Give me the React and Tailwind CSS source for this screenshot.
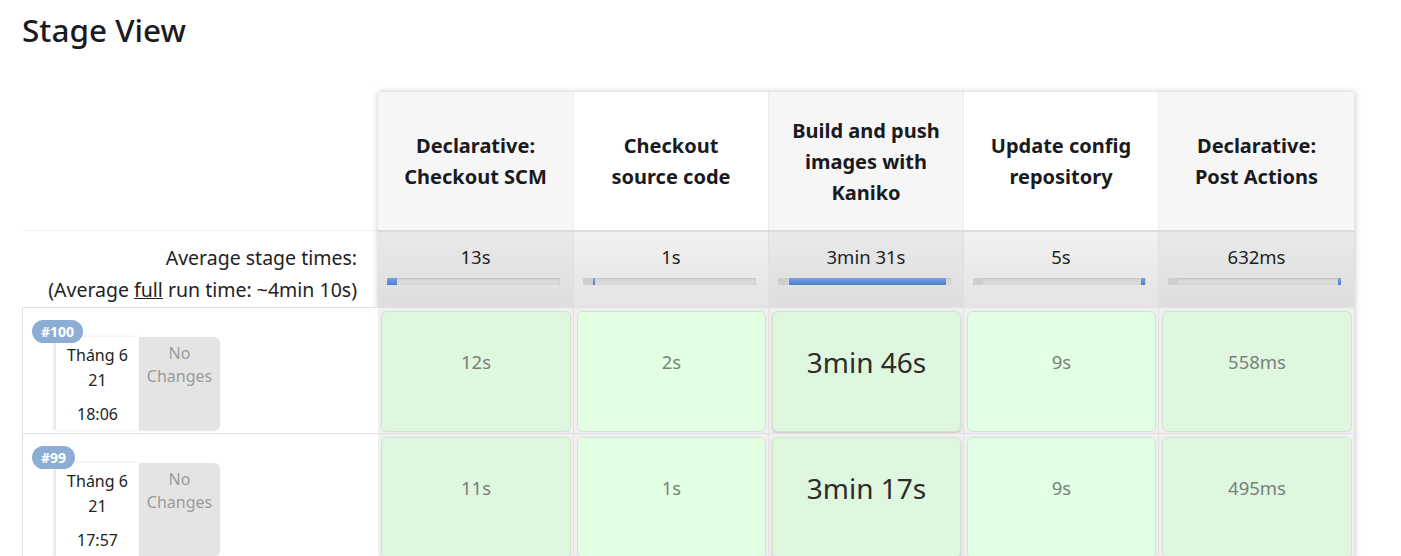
import React from "react";

const stages = [
  { name: ["Declarative:", "Checkout SCM"], avg: "13s", bar: [0, 6] },
  { name: ["Checkout", "source code"], avg: "1s", bar: [5.8, 0.8] },
  { name: ["Build and push", "images with", "Kaniko"], avg: "3min 31s", bar: [6.4, 90.8] },
  { name: ["Update config", "repository"], avg: "5s", bar: [97, 2.4] },
  { name: ["Declarative:", "Post Actions"], avg: "632ms", bar: [98.5, 1.5] },
];

const builds = [
  { id: "#100", date: "Tháng 6", day: "21", time: "18:06", times: ["12s", "2s", "3min 46s", "9s", "558ms"] },
  { id: "#99", date: "Tháng 6", day: "21", time: "17:57", times: ["11s", "1s", "3min 17s", "9s", "495ms"] },
];

const RunInfo = ({ b }) => (
  <div className="relative h-[126px] border-t border-l border-[#e2e2e2] bg-white">
    <div className="absolute left-[33px] top-[29px] flex h-[93px]">
      <div className="flex w-[83px] flex-col items-center bg-white pt-[6px] text-[16px] leading-[25px] text-[#222] shadow-[-2px_0_3px_rgba(0,0,0,0.12)]">
        <span>{b.date}</span>
        <span>{b.day}</span>
        <span className="mt-[9px]">{b.time}</span>
      </div>
      <div className="flex w-[81px] flex-col items-center rounded-r-[6px] bg-[#e4e4e4] pt-[5px] text-[16px] leading-[23px] text-[#9b9b9b] shadow-[0_1px_2px_rgba(0,0,0,0.1)]">
        <span>No</span>
        <span>Changes</span>
      </div>
    </div>
    <span className="absolute left-[9px] top-[12px] flex h-[23px] items-center rounded-full bg-[#8daed4] px-[9px] text-[14px] font-bold text-white">
      {b.id}
    </span>
  </div>
);

export default function App() {
  return (
    <div className="min-h-screen bg-white font-['Noto_Sans',sans-serif] text-[#1a1a22]">
      <h1 className="pl-[22px] pt-[12px] text-[31.5px] font-medium leading-[36px]">Stage View</h1>

      <div className="mt-[44px] ml-[22px] flex">
        {/* left column */}
        <div className="w-[356px] flex-none">
          <div className="h-[138px]" />
          <div className="h-[77px] border-t border-[#f0f0f0] pr-[21px] pt-[11px] text-right text-[19.5px] leading-[32px] text-[#222]">
            <div>Average stage times:</div>
            <div>
              (Average <span className="underline">full</span> run time: ~4min 10s)
            </div>
          </div>
          {builds.map((b) => (
            <RunInfo key={b.id} b={b} />
          ))}
        </div>

        {/* stage columns */}
        <div className="grid w-[977px] flex-none grid-cols-[196px_195px_195px_195px_196px] shadow-[0_0_6px_rgba(0,0,0,0.22)]">
          {stages.map((s, i) => (
            <div
              key={"h" + i}
              className={`flex h-[138px] flex-col items-center justify-center border-r border-[#ececec] px-2 text-center text-[20px] font-bold leading-[31px] ${
                i % 2 === 0 ? "bg-[#f6f6f6]" : "bg-white"
              }`}
            >
              {s.name.map((l) => (
                <span key={l}>{l}</span>
              ))}
            </div>
          ))}

          {stages.map((s, i) => (
            <div
              key={"a" + i}
              className={`h-[77px] border-t-2 border-r border-t-[#dcdcdc] border-r-[#e0e0e0] pt-[9px] ${
                i % 2 === 0
                  ? "bg-linear-to-b from-[#e9e9e9] to-[#dedede]"
                  : "bg-linear-to-b from-[#f1f1f1] to-[#e4e4e4]"
              }`}
            >
              <div className="text-center text-[18.5px] leading-[32px] text-[#222]">{s.avg}</div>
              <div className="relative mt-[5px] ml-[9px] h-[7px] w-[173px] bg-[#d9d9d9] shadow-[inset_0_1px_2px_rgba(0,0,0,0.12)]">
                <div className="absolute left-0 top-0 h-full w-[10px] bg-[#cfcfcf]" />
                <div
                  className="absolute top-0 h-full min-w-[2px] bg-linear-to-b from-[#7aa3e0] to-[#4a7fd0]"
                  style={{ left: `${s.bar[0]}%`, width: `${s.bar[1]}%` }}
                />
              </div>
            </div>
          ))}

          {builds.map((b) =>
            b.times.map((t, i) => {
              const big = i === 2;
              return (
                <div
                  key={b.id + i}
                  className="h-[126px] border-r border-t border-[#e2e2e2] bg-[#efefef] pl-[3px] pr-[2px] pt-[3px] pb-px"
                >
                  <div
                    className={`h-[121px] rounded-[6px] border border-[#d3e3d3] text-center ${
                      i % 2 === 0 ? "bg-[#def7de]" : "bg-[#e3ffe3]"
                    } ${big ? "pt-[32px] text-[28px] leading-[36px] text-[#2c2c2c] shadow-[0_2px_3px_rgba(0,0,0,0.15)]" : "pt-[35px] text-[18.5px] leading-[30px] text-[#7a7f7a]"}`}
                  >
                    {t}
                  </div>
                </div>
              );
            })
          )}
        </div>
      </div>
    </div>
  );
}
